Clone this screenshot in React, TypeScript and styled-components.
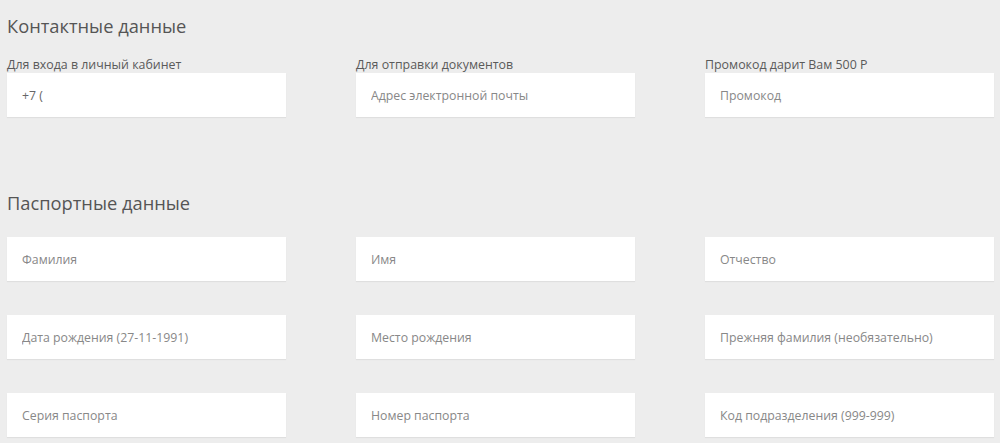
import React from 'react';
import styled, { createGlobalStyle } from 'styled-components';

const GlobalStyle = createGlobalStyle`
  html, body {
    margin: 0;
    padding: 0;
    background: #ededed;
    font-family: "Open Sans", "Noto Sans", Arial, sans-serif;
  }
`;

const Page = styled.div`
  width: 1000px;
  height: 443px;
  overflow: hidden;
  padding: 0 0 0 7px;
  box-sizing: border-box;
`;

const SectionTitle = styled.h2<{ top: number }>`
  margin: ${({ top }) => top}px 0 0;
  font-size: 18.3px;
  line-height: 24px;
  font-weight: 400;
  color: #555;
`;

const Grid = styled.div<{ top: number }>`
  display: grid;
  grid-template-columns: 279px 279px 289px;
  column-gap: 70px;
  row-gap: 34px;
  margin-top: ${({ top }) => top}px;
`;

const Field = styled.div`
  display: flex;
  flex-direction: column;
`;

const Label = styled.label`
  font-size: 12.4px;
  line-height: 16px;
  color: #5a5a5a;
`;

const Input = styled.input`
  height: 44px;
  box-sizing: border-box;
  border: none;
  background: #fff;
  box-shadow: 0 1px 1px rgba(0, 0, 0, 0.06);
  padding: 0 15px;
  font-family: inherit;
  font-size: 12.3px;
  color: #666;
  outline: none;

  &::placeholder {
    color: #888;
  }
`;

const contacts = [
  { label: 'Для входа в личный кабинет', value: '+7 (', placeholder: '' },
  { label: 'Для отправки документов', value: '', placeholder: 'Адрес электронной почты' },
  { label: 'Промокод дарит Вам 500 Р', value: '', placeholder: 'Промокод' },
];

const passport = [
  'Фамилия',
  'Имя',
  'Отчество',
  'Дата рождения (27-11-1991)',
  'Место рождения',
  'Прежняя фамилия (необязательно)',
  'Серия паспорта',
  'Номер паспорта',
  'Код подразделения (999-999)',
];

const App: React.FC = () => (
  <>
    <GlobalStyle />
    <Page>
      <SectionTitle top={14}>Контактные данные</SectionTitle>
      <Grid top={19}>
        {contacts.map(c => (
          <Field key={c.label}>
            <Label>{c.label}</Label>
            <Input defaultValue={c.value} placeholder={c.placeholder} />
          </Field>
        ))}
      </Grid>
      <SectionTitle top={74}>Паспортные данные</SectionTitle>
      <Grid top={22}>
        {passport.map(p => (
          <Field key={p}>
            <Input placeholder={p} />
          </Field>
        ))}
      </Grid>
    </Page>
  </>
);

export default App;
